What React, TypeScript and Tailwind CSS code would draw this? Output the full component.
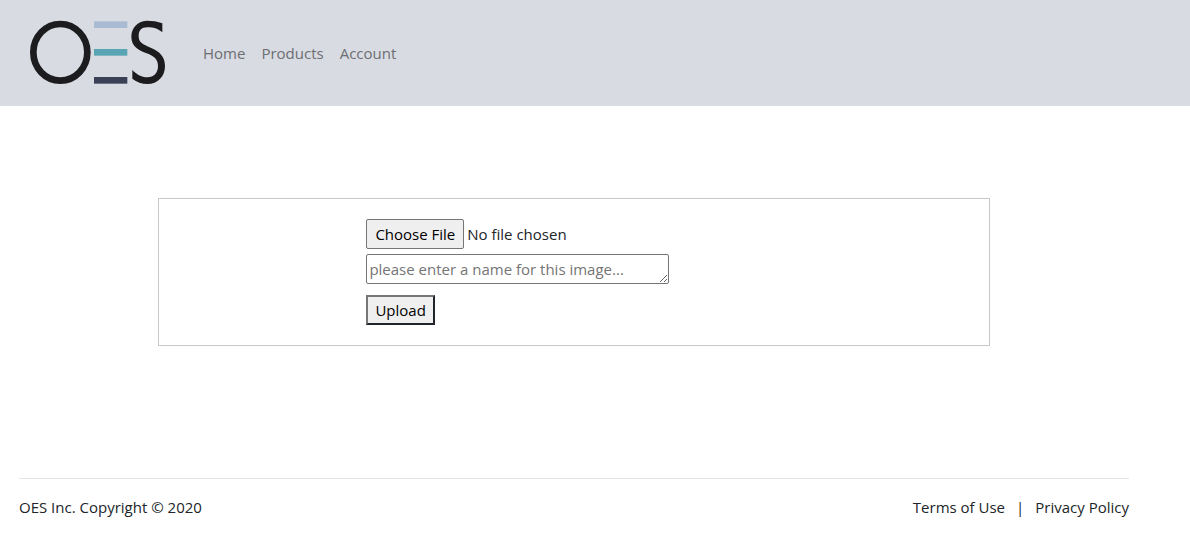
function Logo() {
  return (
    <svg viewBox="87 60 411 195" className="h-[65px] w-[137px]" role="img" aria-label="OES">
      <ellipse cx="181" cy="157" rx="81" ry="85" fill="none" stroke="#1c1c1e" strokeWidth="20" />
      <rect x="282" y="64" width="100" height="20" fill="#a9bbd2" />
      <rect x="282" y="147" width="100" height="20" fill="#5aa5b3" />
      <rect x="282" y="231" width="100" height="20" fill="#3a4056" />
      <path
        fill="#1c1c1e"
        d="M487 70C474 64 456 62 440 62C412 63 394 84 394 110C394 140 418 152 440 160C462 168 474 178 474 198C474 218 462 232 442 232C424 232 408 222 397 210V236C410 246 426 252 442 252C474 252 495 229 495 198C495 170 480 155 452 143C428 133 416 128 416 108C416 92 424 82 442 82C460 82 474 86 487 97Z"
      />
    </svg>
  );
}

const links = ["Home", "Products", "Account"];

export default function App() {
  return (
    <div className="bg-white font-['Open_Sans',sans-serif] text-[15px] leading-6 text-[#212529]">
      <header className="flex items-center bg-[#d8dbe2] pt-5 pb-[21px] pl-[29px] pr-4">
        <a href="#home" className="mr-[29px] block">
          <Logo />
        </a>
        <nav className="flex">
          {links.map((label) => (
            <a key={label} href={`#${label.toLowerCase()}`} className="px-2 text-[#6c6e71]">
              {label}
            </a>
          ))}
        </nav>
      </header>

      <div className="pl-[19px] pr-[61px]">
        <main className="pt-[92px] pb-[132px]">
          <form
            className="mx-auto w-3/4 border border-[#c8c8c8] py-5"
            onSubmit={(event) => event.preventDefault()}
          >
            <div className="mx-auto flex w-1/2 flex-col items-start">
              <input
                type="file"
                aria-label="Choose an image"
                className="mb-[5px] block h-[30px] max-w-full file:mr-[3px] file:h-[30px] file:rounded-[2px] file:border file:border-solid file:border-[#767676] file:bg-[#efefef] file:px-2 file:text-black"
              />
              <textarea
                rows={1}
                aria-label="Image name"
                placeholder="please enter a name for this image..."
                className="mb-[11px] block h-[30px] w-[303px] max-w-full resize overflow-hidden rounded-[2px] border border-[#767676] bg-white px-0.5 py-0.5 placeholder:text-[#757575]"
              />
              <button
                type="submit"
                className="h-[30px] border-2 border-t-[#767676] border-r-[#212529] border-b-[#212529] border-l-[#767676] bg-[#efefef] px-[7px] text-black"
              >
                Upload
              </button>
            </div>
          </form>
        </main>

        <footer className="flex justify-between border-t border-[#e5e5e5] pt-4 pb-5">
          <p>OES Inc. Copyright © 2020</p>
          <div className="flex gap-[11px]">
            <a href="#terms">Terms of Use</a>
            <span>|</span>
            <a href="#privacy">Privacy Policy</a>
          </div>
        </footer>
      </div>
    </div>
  );
}
